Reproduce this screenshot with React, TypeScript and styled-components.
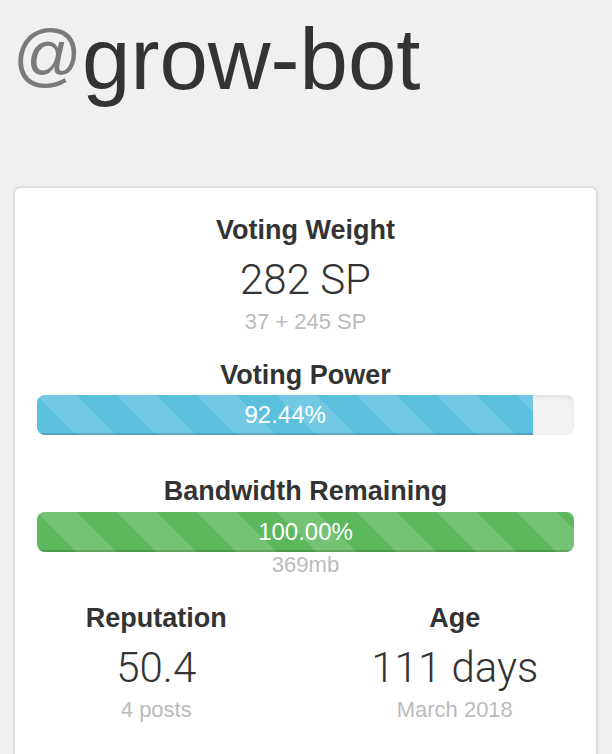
import React from "react";
import styled, { createGlobalStyle } from "styled-components";

const GlobalStyle = createGlobalStyle`
  html, body {
    margin: 0;
    padding: 0;
    background: #f0f0f0;
  }
  body {
    font-family: "Liberation Sans", Arial, Helvetica, sans-serif;
    color: #333;
  }
`;

const Page = styled.div`
  padding: 13px 14px 0 13px;
`;

const Title = styled.h1`
  margin: 0 0 81px 0;
  height: 92px;
  font-size: 87px;
  line-height: 92px;
  font-weight: 400;
  color: #333;
  white-space: nowrap;
`;

const At = styled.span`
  font-size: 68px;
  line-height: 1;
  vertical-align: 11px;
  color: #7a7a7a;
`;

const Card = styled.div`
  background: #fff;
  border: 2px solid #dedede;
  border-bottom: none;
  border-radius: 7px 7px 0 0;
  padding: 27px 22px 40px;
  min-height: 560px;
  box-sizing: border-box;
  box-shadow: 0 2px 2px rgba(0, 0, 0, 0.04);
  text-align: center;
`;

const Section = styled.div<{ $mt?: number }>`
  margin-top: ${(p) => p.$mt ?? 0}px;
`;

const Label = styled.div`
  font-size: 27px;
  line-height: 30px;
  font-weight: 700;
  color: #333;
`;

const Value = styled.div`
  margin-top: 12px;
  font-family: Roboto, "Liberation Sans", sans-serif;
  font-weight: 300;
  font-size: 42px;
  line-height: 46px;
  color: #333;
`;

const Sub = styled.div<{ $mt?: number }>`
  margin-top: ${(p) => p.$mt ?? 7}px;
  font-size: 22px;
  line-height: 24px;
  color: #bbb;
`;

const Progress = styled.div<{ $mt: number }>`
  margin-top: ${(p) => p.$mt}px;
  height: 40px;
  border-radius: 8px;
  background: #f2f2f2;
  box-shadow: inset 0 2px 4px rgba(0, 0, 0, 0.08);
  overflow: hidden;
  display: flex;
`;

const Bar = styled.div<{ $color: string }>`
  height: 100%;
  background-color: ${(p) => p.$color};
  background-image: linear-gradient(
    45deg,
    rgba(255, 255, 255, 0.15) 25%,
    transparent 25%,
    transparent 50%,
    rgba(255, 255, 255, 0.15) 50%,
    rgba(255, 255, 255, 0.15) 75%,
    transparent 75%,
    transparent
  );
  background-size: 80px 80px;
  box-shadow: inset 0 -2px 0 rgba(0, 0, 0, 0.15);
  color: #fff;
  font-size: 24px;
  line-height: 40px;
  text-align: center;
`;

const Row = styled.div`
  display: grid;
  grid-template-columns: 1fr 1fr;
  margin: 26px -30px 0;
`;

const Col = styled.div``;

interface IStat {
  label: string;
  value: string;
  sub: string;
}

const Stat = ({ label, value, sub }: IStat) => (
  <Col>
    <Label>{label}</Label>
    <Value>{value}</Value>
    <Sub>{sub}</Sub>
  </Col>
);

export default function App() {
  const votingPower = 92.44;
  const bandwidth = 100;

  return (
    <Page>
      <GlobalStyle />
      <Title>
        <At>@</At>grow-bot
      </Title>
      <Card>
        <Section>
          <Label>Voting Weight</Label>
          <Value>282 SP</Value>
          <Sub>37 + 245 SP</Sub>
        </Section>

        <Section $mt={26}>
          <Label>Voting Power</Label>
          <Progress $mt={5}>
            <Bar $color="#5bc0de" style={{ width: `${votingPower}%` }}>
              {votingPower.toFixed(2)}%
            </Bar>
          </Progress>
        </Section>

        <Section $mt={41}>
          <Label>Bandwidth Remaining</Label>
          <Progress $mt={6}>
            <Bar $color="#5cb85c" style={{ width: `${bandwidth}%` }}>
              {bandwidth.toFixed(2)}%
            </Bar>
          </Progress>
          <Sub $mt={1}>369mb</Sub>
        </Section>

        <Row>
          <Stat label="Reputation" value="50.4" sub="4 posts" />
          <Stat label="Age" value="111 days" sub="March 2018" />
        </Row>
      </Card>
    </Page>
  );
}
